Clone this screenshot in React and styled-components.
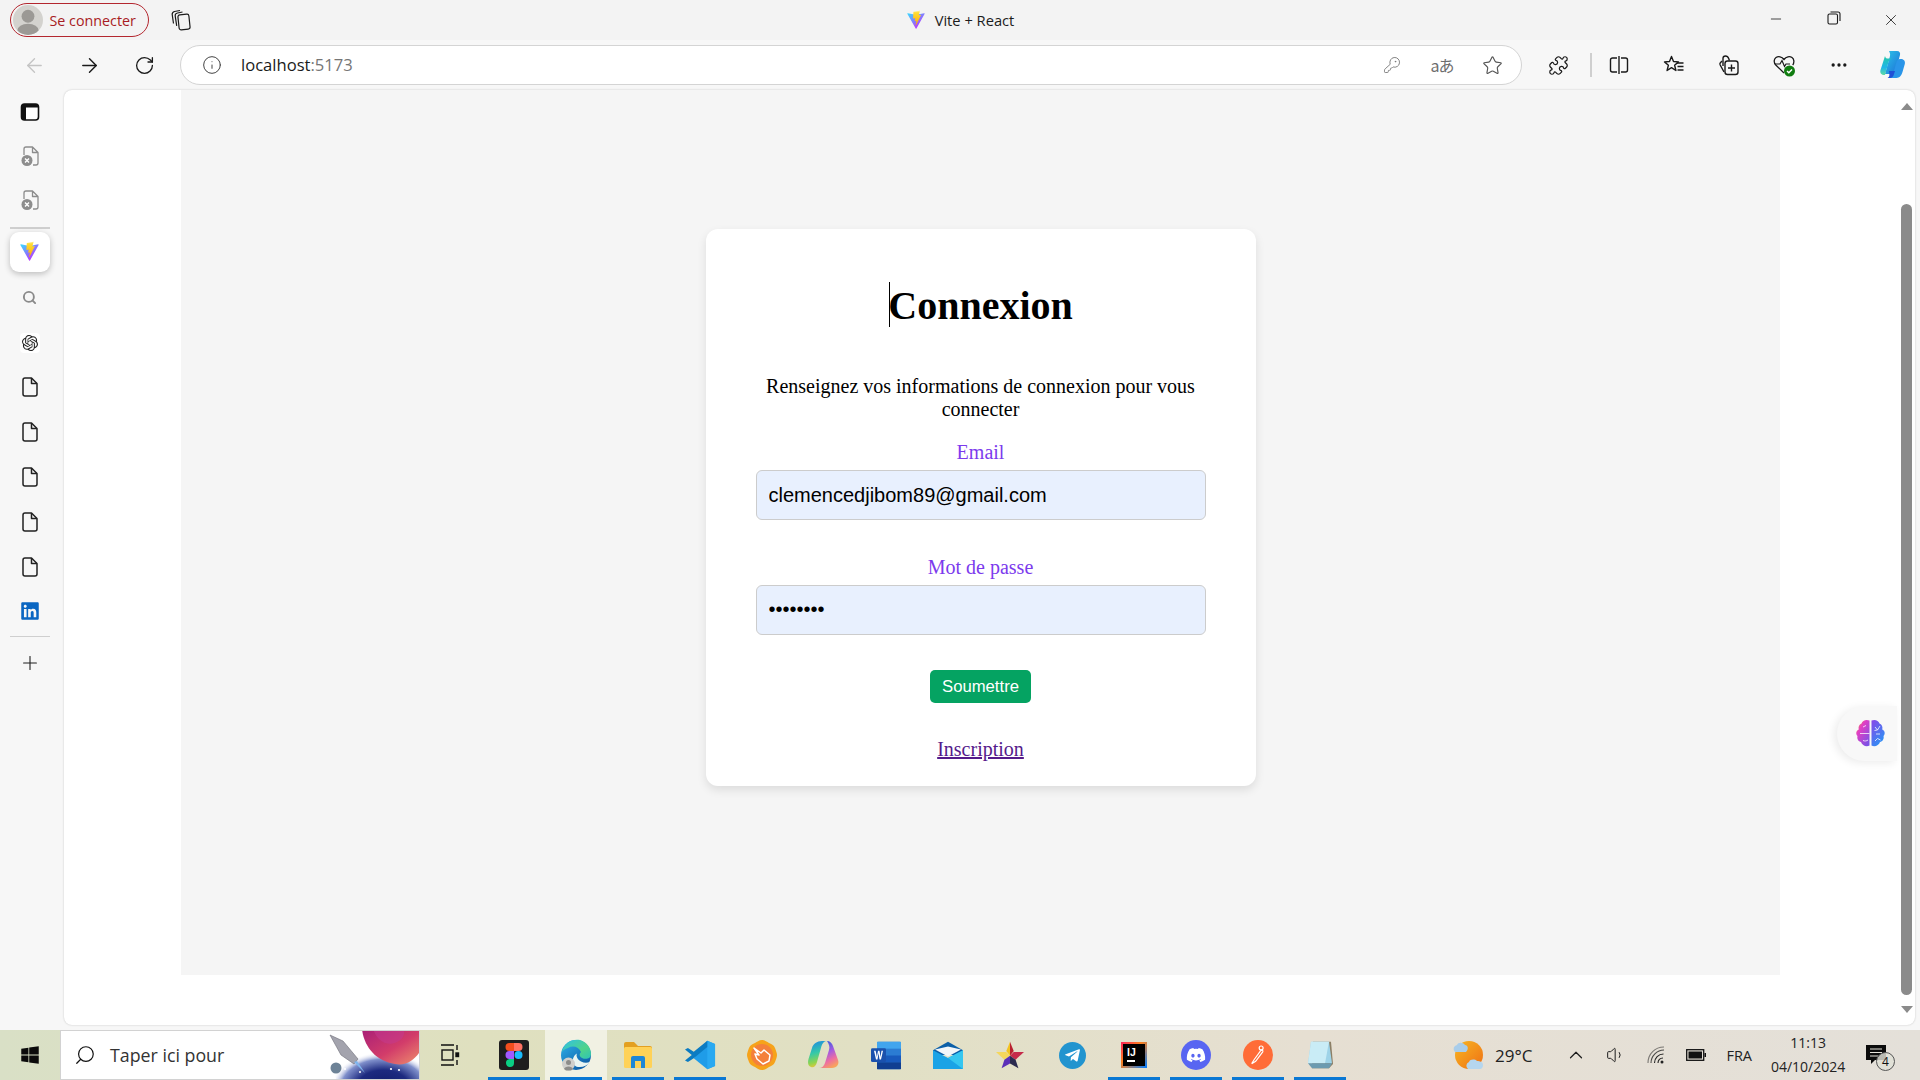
import React from "react";
import styled, { createGlobalStyle } from "styled-components";
import {
  ArrowLeft,
  ArrowRight,
  RotateCw,
  Info,
  KeyRound,
  Star,
  Puzzle,
  MoreHorizontal,
  Minus,
  X,
  Plus,
  Search,
  ChevronUp,
  Volume1,
} from "lucide-react";
import { FaLinkedin, FaDiscord, FaTelegramPlane, FaWindows } from "react-icons/fa";
import { SiOpenai } from "react-icons/si";

const chromeFont = `"Open Sans", "Noto Sans", sans-serif`;

const GlobalStyle = createGlobalStyle`
  html, body {
    margin: 0;
    padding: 0;
    overflow: hidden;
    background: #f7f7f7;
  }
  #root {
    width: 1920px;
    height: 1080px;
  }
`;

const Screen = styled.div`
  width: 1920px;
  height: 1080px;
  display: flex;
  flex-direction: column;
  overflow: hidden;
  font-family: ${chromeFont};
`;

/* title bar */
const TitleBar = styled.div`
  height: 40px;
  flex: none;
  display: grid;
  grid-template-columns: 1fr auto 1fr;
  align-items: center;
  background: #f3f3f3;
`;
const TitleLeft = styled.div`
  display: flex;
  align-items: center;
  padding-left: 10px;
`;
const ProfilePill = styled.div`
  box-sizing: border-box;
  width: 139px;
  height: 34px;
  display: flex;
  align-items: center;
  gap: 6.5px;
  padding-left: 2px;
  border: 1.5px solid #b3262e;
  border-radius: 17px;
  color: #a81c24;
  font-size: 14.3px;
`;
const Avatar = styled.div`
  width: 30px;
  height: 30px;
  border-radius: 50%;
  overflow: hidden;
  background: #d3d2ce;
  flex: none;
`;
const TabActions = styled.div`
  display: flex;
  margin-left: 21px;
`;
const PageTitle = styled.div`
  display: flex;
  align-items: center;
  gap: 9px;
  font-size: 14.7px;
  color: #1c1c1c;
`;
const WindowControls = styled.div`
  display: flex;
  justify-content: flex-end;
  color: #1a1a1a;
`;
const WindowButton = styled.div`
  width: 57.5px;
  display: flex;
  justify-content: center;
`;

/* address row */
const AddressRow = styled.div`
  height: 50px;
  flex: none;
  display: flex;
  align-items: center;
  padding-left: 7px;
  background: #f7f7f7;
`;
const ToolButton = styled.div`
  width: ${(p) => p.$w || 55}px;
  height: 40px;
  flex: none;
  display: flex;
  align-items: center;
  justify-content: center;
  color: ${(p) => p.$color || "#1a1a1a"};
`;
const AddressBar = styled.div`
  box-sizing: border-box;
  width: 1342px;
  height: 40px;
  margin-left: 8px;
  display: flex;
  align-items: center;
  padding: 0 4px 0 21px;
  background: #fff;
  border: 1.5px solid #d4d4d4;
  border-radius: 20px;
`;
const Url = styled.div`
  margin: -2px 0 0 19px;
  flex: 1;
  font-size: 16.6px;
  color: #1a1a1a;
  span {
    color: #767676;
  }
`;
const TranslateGlyph = styled.span`
  font-family: "Noto Sans CJK JP", "Noto Sans", sans-serif;
  font-size: 16px;
  letter-spacing: -1px;
  color: #6e6e6e;
`;
const ToolDivider = styled.div`
  width: 1.5px;
  height: 24px;
  flex: none;
  margin-left: 4px;
  background: #cfcfcf;
`;
const RightTools = styled.div`
  display: flex;
  align-items: center;
  margin-left: 9px;
`;

/* middle */
const Middle = styled.div`
  flex: 1;
  min-height: 0;
  display: flex;
  padding: 0 5px 5px 0;
  background: #f7f7f7;
`;
const Sidebar = styled.div`
  width: 59px;
  margin-right: 5px;
  flex: none;
  display: flex;
  flex-direction: column;
  align-items: center;
`;
const SideSlot = styled.div`
  width: 100%;
  height: ${(p) => p.$h || 44.8}px;
  flex: none;
  display: flex;
  align-items: center;
  justify-content: center;
  color: ${(p) => p.$color || "#1f1f1f"};
`;
const SideDivider = styled.div`
  width: 40px;
  height: 1.5px;
  flex: none;
  margin: ${(p) => p.$margin};
  background: #cfcfcf;
`;
const ActiveTile = styled.div`
  width: 40px;
  height: 40px;
  flex: none;
  margin-bottom: 4px;
  display: flex;
  align-items: center;
  justify-content: center;
  background: #fff;
  border-radius: 9px;
  box-shadow: 0 2px 6px rgba(0, 0, 0, 0.24);
`;
const OpenAiBadge = styled.div`
  width: 20px;
  height: 20px;
  display: flex;
  align-items: center;
  justify-content: center;
  background: #fff;
  border-radius: 4px;
`;

/* page */
const Page = styled.div`
  position: relative;
  flex: 1;
  display: flex;
  padding-left: 117px;
  background: #fff;
  border-radius: 8px;
  box-shadow: 0 0 2px rgba(0, 0, 0, 0.22);
  overflow: hidden;
`;
const GrayArea = styled.div`
  box-sizing: border-box;
  width: 1599px;
  height: 885px;
  flex: none;
  display: flex;
  justify-content: center;
  padding-top: 139px;
  background: #f5f5f5;
`;
const Card = styled.form`
  box-sizing: border-box;
  width: 550px;
  height: 557px;
  padding: 54px 50px 25px;
  display: flex;
  flex-direction: column;
  align-items: center;
  background: #fff;
  border-radius: 12px;
  box-shadow: 0 4px 10px rgba(0, 0, 0, 0.1);
  font-family: "Liberation Serif", "Times New Roman", serif;
`;
const Title = styled.h1`
  position: relative;
  margin: 0 0 46px;
  font-size: 40px;
  line-height: 46px;
  font-weight: 700;
  color: #000;
`;
const Caret = styled.span`
  position: absolute;
  left: 1px;
  top: -1px;
  width: 1px;
  height: 45px;
  background: #000;
`;
const Intro = styled.p`
  margin: 0 0 20px;
  font-size: 20px;
  line-height: 23px;
  text-align: center;
  color: #000;
`;
const FieldLabel = styled.label`
  margin-bottom: 6px;
  font-size: 20px;
  line-height: 23px;
  color: #7c3aed;
`;
const TextField = styled.input`
  box-sizing: border-box;
  width: 450px;
  height: 50px;
  flex: none;
  margin-bottom: 35.5px;
  padding: 0 12px;
  background: #e8f0fe;
  border: 1.5px solid #cccccc;
  border-radius: 6px;
  outline: none;
  color: #000;
  font-family: "Liberation Sans", Arial, sans-serif;
  font-size: 20px;
`;
const SubmitButton = styled.button`
  box-sizing: border-box;
  width: 101px;
  height: 33px;
  flex: none;
  margin-bottom: 35px;
  padding: 0;
  background: #05a362;
  border: none;
  border-radius: 5px;
  color: #fff;
  font-family: "Liberation Sans", Arial, sans-serif;
  font-size: 16.7px;
`;
const SignupLink = styled.a`
  font-size: 20px;
  line-height: 23px;
  color: #551a8b;
  text-decoration: underline;
`;

/* fake scrollbar */
const ScrollColumn = styled.div`
  width: 17px;
  margin-left: auto;
  display: flex;
  flex-direction: column;
  align-items: center;
`;
const ScrollArrow = styled.div`
  width: 0;
  height: 0;
  flex: none;
  margin: ${(p) => p.$margin};
  border-left: 6.5px solid transparent;
  border-right: 6.5px solid transparent;
  border-${(p) => (p.$up ? "bottom" : "top")}: 7px solid #8b8b8b;
`;
const ScrollThumb = styled.div`
  width: 11px;
  height: 791px;
  flex: none;
  background: #8b8b8b;
  border-radius: 5.5px;
`;
const AssistantTab = styled.div`
  position: absolute;
  right: 18px;
  top: 616px;
  width: 60px;
  height: 55px;
  display: flex;
  align-items: center;
  justify-content: center;
  padding-left: 6px;
  box-sizing: border-box;
  background: #f8f8f8;
  border-radius: 28px 0 0 28px;
  box-shadow: -3px 2px 9px rgba(0, 0, 0, 0.08);
`;

/* taskbar */
const Taskbar = styled.div`
  height: 50px;
  flex: none;
  display: flex;
  align-items: stretch;
  background: linear-gradient(90deg, #d9e0c6 0%, #dfe0bf 25%, #e1e0c4 45%, #e6dfd2 68%, #e4e0d9 100%);
  color: #111;
`;
const StartButton = styled.div`
  width: 60px;
  flex: none;
  display: flex;
  align-items: center;
  justify-content: center;
  color: #0b0b0b;
`;
const SearchBox = styled.div`
  box-sizing: border-box;
  width: 360px;
  flex: none;
  display: flex;
  align-items: center;
  padding-left: 13px;
  background: #fff;
  border: 1px solid #d2d2d2;
  overflow: hidden;
`;
const SearchText = styled.span`
  margin-left: 14px;
  font-size: 17.8px;
  color: #333;
`;
const SearchArt = styled.svg`
  margin-left: auto;
  flex: none;
`;
const TaskViewButton = styled.div`
  width: 60px;
  flex: none;
  margin-right: 3px;
  display: flex;
  align-items: center;
  justify-content: center;
`;
const TaskSlot = styled.div`
  position: relative;
  width: 62px;
  flex: none;
  display: flex;
  align-items: center;
  justify-content: center;
  background: ${(p) => (p.$focused ? "rgba(255,255,255,0.55)" : "transparent")};
  &::after {
    content: "";
    display: ${(p) => (p.$running ? "block" : "none")};
    position: absolute;
    left: 5px;
    right: 5px;
    bottom: 0;
    height: 3px;
    background: #0a78d4;
  }
`;
const IjTile = styled.div`
  box-sizing: border-box;
  width: 26px;
  height: 26px;
  padding: 3px 4px;
  background: #000;
  border: 2px solid;
  border-image: linear-gradient(135deg, #fe2857, #fc801d 40%, #087cfa) 1;
  color: #fff;
  font-family: "Liberation Sans", sans-serif;
  font-size: 10.5px;
  font-weight: 700;
  line-height: 11px;
  &::after {
    content: "";
    display: block;
    width: 8px;
    height: 1.5px;
    margin-top: 2px;
    background: #fff;
  }
`;
const RoundApp = styled.div`
  width: ${(p) => p.$size || 30}px;
  height: ${(p) => p.$size || 30}px;
  border-radius: 50%;
  display: flex;
  align-items: center;
  justify-content: center;
  background: ${(p) => p.$bg};
  color: #fff;
`;
const Tray = styled.div`
  flex: 1;
  display: flex;
  align-items: center;
  min-width: 0;
`;
const Weather = styled.div`
  display: flex;
  align-items: center;
  gap: 11px;
  margin-left: 101px;
  font-size: 17px;
  color: #222;
`;
const TrayIcon = styled.div`
  width: 40px;
  flex: none;
  display: flex;
  justify-content: center;
  color: #1c1c1c;
`;
const TrayIcons = styled.div`
  display: flex;
  align-items: center;
  margin-left: 24px;
`;
const Lang = styled.div`
  margin-left: 10px;
  font-size: 14.5px;
  color: #222;
`;
const Clock = styled.div`
  width: 90px;
  margin-left: 11px;
  text-align: center;
  font-size: 14px;
  line-height: 24px;
  color: #222;
`;
const Notification = styled.div`
  position: relative;
  margin-left: 13px;
  display: flex;
`;
const NotificationBadge = styled.span`
  position: absolute;
  right: -9px;
  bottom: -6px;
  width: 19px;
  height: 19px;
  box-sizing: border-box;
  display: flex;
  align-items: center;
  justify-content: center;
  border: 1px solid #555;
  border-radius: 50%;
  background: rgba(225, 224, 215, 0.82);
  font-size: 12px;
  color: #111;
`;

/* drawings */
const ViteLogo = ({ id, size = 20 }) => (
  <svg width={size} height={size} viewBox="0 0 32 32" fill="none">
    <defs>
      <linearGradient id={`${id}a`} x1="6" y1="5" x2="22" y2="27" gradientUnits="userSpaceOnUse">
        <stop stopColor="#41D1FF" />
        <stop offset="1" stopColor="#BD34FE" />
      </linearGradient>
      <linearGradient id={`${id}b`} x1="17" y1="2" x2="17" y2="25" gradientUnits="userSpaceOnUse">
        <stop stopColor="#FFEA83" />
        <stop offset="0.1" stopColor="#FFDD35" />
        <stop offset="1" stopColor="#FFA800" />
      </linearGradient>
    </defs>
    <path
      fill={`url(#${id}a)`}
      d="M29.8836 6.146L16.7418 29.6457c-.2714.4851-.9684.488-1.2439.0052L2.0956 6.1482c-.3-.5262.1498-1.1635.746-1.057l13.156 2.3516c.0839.015.1698.0148.2537-.0004l12.8806-2.3478c.5942-.1083 1.0461.5241.7516 1.0513Z"
    />
    <path
      fill={`url(#${id}b)`}
      d="M21.8807 1.0047 12.1547 2.9105c-.1562.0306-.2717.1627-.2812.3216l-.5983 10.1049c-.0141.238.2045.4226.4369.369l2.7079-.6249c.2533-.0584.4823.1646.4302.4194l-.8045 3.9397c-.0541.2651.1948.4918.4537.4132l1.6726-.5081c.2592-.0787.5082.1487.4536.414l-1.2784 6.1877c-.08.387.4348.5981.6496.2664l.1434-.2215 7.9257-15.8172c.1327-.2649-.096-.5669-.387-.5106l-2.7873.538c-.2619.0506-.4847-.1933-.4108-.4493l1.8192-6.3066c.0739-.2565-.1496-.5007-.4119-.4491Z"
    />
  </svg>
);

const TabStack = () => (
  <svg width="22" height="22" viewBox="0 0 22 22" fill="none" stroke="#1a1a1a" strokeWidth="1.2" strokeLinejoin="round">
    <path d="M10 1.500 4.500 2.500C3 3 2 4 2.200 5.500l1.300 9" />
    <path d="M12.500 3 7.500 4C6 4.300 5 5.200 5.200 6.800l1.500 10" />
    <rect x="8.500" y="5.500" width="11" height="15" rx="2" transform="rotate(-6 14 13)" />
  </svg>
);

const SidebarToggle = () => (
  <svg width="20" height="20" viewBox="0 0 20 20">
    <rect x="1.500" y="2" width="17" height="16" rx="3" fill="#fff" stroke="#111" strokeWidth="1.600" />
    <path d="M1.500 5a3 3 0 0 1 3-3h11a3 3 0 0 1 3 3v.5h-17z" fill="#111" />
    <path d="M1.500 5H6v13H4.500a3 3 0 0 1-3-3z" fill="#111" />
  </svg>
);

const DocIcon = () => (
  <svg width="16" height="20" viewBox="0 0 16 20" fill="none" stroke="#222" strokeWidth="1.500" strokeLinejoin="round">
    <path d="M3 1h6.500L15 6.500V17a2 2 0 0 1-2 2H3a2 2 0 0 1-2-2V3a2 2 0 0 1 2-2Z" />
    <path d="M9.500 1v5.500H15" />
  </svg>
);

const DocErrorIcon = () => (
  <svg width="18" height="20" viewBox="0 0 18 20" fill="none">
    <path d="M5 1h6.500L17 6.500V17a2 2 0 0 1-2 2h-3M3 9V3a2 2 0 0 1 2-2m6.500 0v5.500H17" stroke="#8d8d8d" strokeWidth="1.300" strokeLinejoin="round" />
    <circle cx="6" cy="14.500" r="5.500" fill="#8d8d8d" />
    <path d="m4 12.500 4 4m0-4-4 4" stroke="#fff" strokeWidth="1.400" />
  </svg>
);

const SplitIcon = () => (
  <svg width="20" height="20" viewBox="0 0 20 20" fill="none" stroke="#1a1a1a" strokeWidth="1.400">
    <path d="M8 3H3.500a2 2 0 0 0-2 2v10a2 2 0 0 0 2 2H8M12 3h4.500a2 2 0 0 1 2 2v10a2 2 0 0 1-2 2H12" />
    <path d="M10 1v18" />
  </svg>
);

const FavoritesIcon = () => (
  <svg width="22" height="22" viewBox="0 0 22 22" fill="none" stroke="#1a1a1a" strokeWidth="1.400" strokeLinejoin="round">
    <path d="m8.500 2.500 2 5 5 .4-3.900 3.300 1.300 5.300-4.400-2.900-4.400 2.900 1.300-5.300L1.500 7.900l5-.4z" />
    <path d="M14 9h6.500M14.500 12.500h6M14.500 16h6" />
  </svg>
);

const CollectionsIcon = () => (
  <svg width="22" height="22" viewBox="0 0 22 22" fill="none" stroke="#1a1a1a" strokeWidth="1.400" strokeLinejoin="round">
    <path d="M4 7 2.200 9c-.5.6-.4 1.200 0 2l3.800 7" />
    <path d="M5 12V4.500C5 3 6 2 7.500 2c1.400 0 2.600.9 3.200 2.500l.7 2" />
    <rect x="7" y="7" width="13" height="13.500" rx="2.500" />
    <path d="M13.500 10.500v7M10 14h7" />
  </svg>
);

const HealthIcon = () => (
  <svg width="24" height="24" viewBox="0 0 24 24" fill="none">
    <path d="M12 20 3.800 12C1.500 9.500 1.800 6 4 4.500c2.300-1.500 5.800-1 8 2 2.200-3 5.700-3.500 8-2 2.200 1.500 2.500 5 .7 7.500" stroke="#1a1a1a" strokeWidth="1.300" />
    <path d="M3 11h5l2-3.500 2.500 6 1.500-2.500h4" stroke="#1a1a1a" strokeWidth="1.200" />
    <circle cx="17.500" cy="18" r="5.500" fill="#107c10" />
    <path d="m15 18 1.800 1.800 3.200-3.400" stroke="#fff" strokeWidth="1.400" />
  </svg>
);

const CopilotLogo = () => (
  <svg width="30" height="30" viewBox="0 0 30 30">
    <defs>
      <linearGradient id="cpA" x1="0" y1="0" x2="1" y2="1">
        <stop stopColor="#2bc5e8" />
        <stop offset="1" stopColor="#1d6ed8" />
      </linearGradient>
      <linearGradient id="cpB" x1="0" y1="0" x2="0" y2="1">
        <stop stopColor="#24c8a8" />
        <stop offset="0.6" stopColor="#1fb6e8" />
        <stop offset="1" stopColor="#61dba0" />
      </linearGradient>
    </defs>
    <path d="M13 1h8c2.500 0 3.500 2 3 4l-4 15c-.8 3-2 4-5 4H9l5-18c.4-1.800-.2-3-1-5Z" fill="url(#cpA)" />
    <path d="M9 6 4.500 20c-.8 2.500.5 5 3.500 5h1l3.500-13c.6-2 1.600-3 3-3.500H11C10 8.500 9.300 7.500 9 6Z" fill="url(#cpB)" />
    <path d="M24 9h1c3 0 4.500 2.500 3.800 5l-2.300 8c-.8 3-3 6-6 6h-9c2.500 0 4.500-1.500 5.500-4l1.500-5 2-7c.6-1.800 1.700-2.800 3.500-3Z" fill="#2a95e8" />
    <path d="M13 21h6l-1.500 4.500c-.7 1.500-2 2.500-3.500 2.500h-3c2 0 3-2 2-7Z" fill="#2150d6" />
  </svg>
);

const BrainLogo = () => (
  <svg width="31" height="29" viewBox="0 0 31 29" fill="none">
    <defs>
      <linearGradient id="brL" x1="0" y1="0" x2="0.8" y2="1">
        <stop stopColor="#f59a23" />
        <stop offset="0.35" stopColor="#e23fc4" />
        <stop offset="1" stopColor="#7a52e6" />
      </linearGradient>
      <linearGradient id="brR" x1="0" y1="0" x2="0.6" y2="1">
        <stop stopColor="#8a45e8" />
        <stop offset="1" stopColor="#2c92f5" />
      </linearGradient>
    </defs>
    <path d="M14.500 1.500C11 0 7.500 1.500 6.500 4.500 4 5.500 3 8 3.800 10.500 1 11.500.5 15 2.500 17c-.8 3 1 5.500 3.500 6 1 3.500 5.500 5.500 8.500 3.500Z" fill="url(#brL)" />
    <path d="M16.500 1.500c3.500-1.500 7 0 8 3 2.500 1 3.500 3.500 2.700 6 2.800 1 3.300 4.500 1.300 6.500.8 3-1 5.500-3.500 6-1 3.500-5.500 5.500-8.500 3.500Z" fill="url(#brR)" />
    <path d="M5 14.500h9.500M8 8l3-1.500M8 21.500c2 .8 3.500.5 5-.5M20 8l2.500 3M25 7l-2.500 4-3 .5M25 15h-4M20 22l2.500-2.500 3 1.500" stroke="#fff" strokeOpacity="0.75" strokeWidth="1" />
  </svg>
);

const RocketArt = () => (
  <SearchArt width="90" height="48" viewBox="0 0 90 48">
    <defs>
      <radialGradient id="nebula" cx="0.55" cy="0.75" r="0.6">
        <stop stopColor="#0f1a68" />
        <stop offset="0.5" stopColor="#1d2a80" />
        <stop offset="0.8" stopColor="#7f8fcb" />
        <stop offset="1" stopColor="#fff" stopOpacity="0" />
      </radialGradient>
      <linearGradient id="planet" x1="0" y1="0" x2="1" y2="1">
        <stop stopColor="#a81f78" />
        <stop offset="0.55" stopColor="#d23c6a" />
        <stop offset="1" stopColor="#ee8c6c" />
      </linearGradient>
    </defs>
    <ellipse cx="50" cy="42" rx="44" ry="30" fill="url(#nebula)" />
    <path d="M33 -2h57v24c-5 7-13 13-24 11C47 30 35 16 33 -2Z" fill="url(#planet)" />
    <path d="M44 -2c4 12 14 18 24 13 6-3 8-8 7-13z" fill="#c43a8e" fillOpacity="0.55" />
    <circle cx="7" cy="37" r="5.500" fill="#6d8296" />
    <path d="M1 4 14 10 29 28 25 33 12 24Z" fill="#a3a3ad" stroke="#6f6f78" strokeWidth="0.600" />
    <path d="m25 31 11 11-8-12z" fill="#7fb5ee" />
    <circle cx="16" cy="38" r="1" fill="#fff" />
    <circle cx="31" cy="41" r="1" fill="#fff" />
    <circle cx="62" cy="38" r="1.100" fill="#fff" />
    <circle cx="70" cy="39" r="1.100" fill="#fff" />
  </SearchArt>
);

const TaskViewIcon = () => (
  <svg width="20" height="24" viewBox="0 0 20 24" fill="none" stroke="#111" strokeWidth="1.400">
    <path d="M1 2h13M1 22h13" />
    <rect x="2" y="7" width="11" height="10" />
    <path d="M17 2v5M17 17v5" />
    <rect x="16" y="10" width="2.500" height="3.500" fill="#111" />
  </svg>
);

const FigmaLogo = () => (
  <svg width="30" height="30" viewBox="0 0 30 30">
    <rect width="30" height="30" rx="3" fill="#1e1e1e" />
    <path d="M10.500 3H15v8h-4.500a4 4 0 0 1 0-8Z" fill="#f24e1e" />
    <path d="M15 3h4.500a4 4 0 0 1 0 8H15z" fill="#ff7262" />
    <path d="M10.500 11H15v8h-4.500a4 4 0 0 1 0-8Z" fill="#a259ff" />
    <circle cx="19.500" cy="15" r="4" fill="#1abcfe" />
    <path d="M10.500 19H15v4a4 4 0 1 1-4.500-4Z" fill="#0acf83" />
  </svg>
);

const EdgeLogo = () => (
  <svg width="32" height="32" viewBox="0 0 32 32">
    <defs>
      <linearGradient id="edA" x1="0" y1="0" x2="0.8" y2="1">
        <stop stopColor="#2fb4ec" />
        <stop offset="1" stopColor="#0c59a4" />
      </linearGradient>
      <linearGradient id="edB" x1="0" y1="0" x2="1" y2="1">
        <stop stopColor="#2fc0e8" />
        <stop offset="0.6" stopColor="#4fd38a" />
        <stop offset="1" stopColor="#2ec4b6" />
      </linearGradient>
    </defs>
    <circle cx="16" cy="16" r="15" fill="url(#edA)" />
    <path d="M2 13C4 4 12-.5 20 1c7 2 11 8 11 14 0 4.500-5 6-9 4-3-1.500-3-4-1-6-2-5-8-7-13-4-3 1-5 2-6 4Z" fill="url(#edB)" />
    <path d="M18 28c5 .5 9-1 12-5-3 1-6 1-9-.5-3-1.500-5.500-5.500-4-8-3.500 2-5 6-3.500 10 1 2 2.500 3.500 4.500 3.500Z" fill="#e9f5f2" />
    <circle cx="8.500" cy="25" r="6.500" fill="#cfcfcc" />
    <circle cx="8.500" cy="23.500" r="2.500" fill="#8c8c8a" />
    <path d="M4 30c.8-3.500 8.200-3.500 9 0l-2 1.500H6Z" fill="#8c8c8a" />
  </svg>
);

const FilesLogo = () => (
  <svg width="30" height="28" viewBox="0 0 30 28">
    <path d="M1 3a2 2 0 0 1 2-2h8l4 4h12a2 2 0 0 1 2 2v3H1z" fill="#e3a021" />
    <rect x="1" y="6" width="28" height="21" rx="1.500" fill="#ffd257" />
    <path d="M8 27V17a2 2 0 0 1 2-2h10a2 2 0 0 1 2 2v10h-4v-7h-6v7z" fill="#1f87d6" />
  </svg>
);

const VsCodeLogo = () => (
  <svg width="31" height="30" viewBox="0 0 32 38" preserveAspectRatio="none">
    <path d="M23 1 31 5v28l-8 4-14-14z" fill="#1f9ce8" />
    <path d="M23 1v36l8-4V5z" fill="#29a9f1" />
    <path d="M23 9 9 23 3 28l-3-2 7-7-7-7 3-2 6 5L23 1z" fill="#0b7bc2" />
  </svg>
);

const BraveHandLogo = () => (
  <svg width="30" height="30" viewBox="0 0 30 30">
    <path d="M15 0c3 0 5 2 7 3s5 2 6 5 2 5 2 7-1 4-2 7-4 4-6 5-4 3-7 3-5-2-7-3-5-2-6-5-2-5-2-7 1-4 2-7 4-4 6-5 4-3 7-3Z" fill="#f6a31a" />
    <circle cx="15" cy="15" r="11" fill="#f4803b" />
    <path d="M7 8 14 13 17 10l6 5-1 6-6 3-6-5-2-5 4 1z" fill="none" stroke="#fff" strokeWidth="1.500" strokeLinejoin="round" />
  </svg>
);

const M365Logo = () => (
  <svg width="32" height="30" viewBox="0 0 32 30">
    <defs>
      <linearGradient id="msA" x1="0.3" y1="0" x2="0.5" y2="1">
        <stop stopColor="#1f8de0" />
        <stop offset="0.45" stopColor="#35c9a8" />
        <stop offset="0.8" stopColor="#93d54c" />
        <stop offset="1" stopColor="#f6c23d" />
      </linearGradient>
      <linearGradient id="msB" x1="0.2" y1="0" x2="0.6" y2="1">
        <stop stopColor="#2a5fdc" />
        <stop offset="0.45" stopColor="#a45be0" />
        <stop offset="0.75" stopColor="#ee6fa0" />
        <stop offset="1" stopColor="#f8a25e" />
      </linearGradient>
    </defs>
    <path d="M19 1c3 0 5 2 6 5l5 14c1.500 4-1 8-6 8H11c3 0 5-2 6-5l4-13c1-3 0-6-2-9Z" fill="url(#msB)" />
    <path d="M14 1h5c-3 0-4.500 2-5.500 5L9 22c-1 4-3 6-6 5s-3.500-4-2.500-8L4 8c1-4 5-7 10-7Z" fill="url(#msA)" />
  </svg>
);

const WordLogo = () => (
  <svg width="30" height="29" viewBox="0 0 30 36" preserveAspectRatio="none">
    <rect x="6" y="1" width="24" height="34" rx="1.500" fill="#2b7cd3" />
    <rect x="6" y="1" width="24" height="8.500" fill="#41a5ee" />
    <rect x="6" y="18" width="24" height="8.500" fill="#185abd" />
    <rect x="6" y="26.500" width="24" height="8.500" fill="#103f91" />
    <rect y="9" width="15" height="17" rx="1.500" fill="#1a51ad" />
    <path d="m3 12 2 11h1.500L7.500 15l1 8H10l2-11h-1.500l-1 8-1-8H7l-1.100 8-1.300-8z" fill="#fff" />
  </svg>
);

const MailLogo = () => (
  <svg width="30" height="28" viewBox="0 0 30 36" preserveAspectRatio="none">
    <path d="M15 1 30 12v6H0v-6z" fill="#0b5fa8" />
    <path d="m2 11 13-4 13 4-13 9z" fill="#f2f6fa" />
    <path d="M0 12 15 22 30 12v24H0z" fill="#1aa3e6" />
    <path d="M15 22 30 12v24z" fill="#35c6f0" />
  </svg>
);

const StarLogo = () => (
  <svg width="28" height="28" viewBox="0 0 30 36" preserveAspectRatio="none">
    <path d="M15 1 19 13 15 19z" fill="#b8202f" />
    <path d="M15 1 11 13 15 19z" fill="#f3c320" />
    <path d="M0 14h11l4 5-6 5z" fill="#f5d75c" />
    <path d="M30 14H19l-4 5 6 5z" fill="#c52a4a" />
    <path d="m6 35 3-11 6-5v10z" fill="#5b2fb8" />
    <path d="m24 35-3-11-6-5v10z" fill="#2b2b4f" />
  </svg>
);

const PostmanLogo = () => (
  <RoundApp $size={30} $bg="#ff6c37">
    <svg width="18" height="22" viewBox="0 0 20 28" fill="none" stroke="#fff" strokeWidth="1.500" strokeLinecap="round">
      <circle cx="14" cy="5" r="2.500" />
      <path d="M13 9 5 20l-3 5 5-3L16 10c1-2-1-3-3-1Z" />
    </svg>
  </RoundApp>
);

const NotepadLogo = () => (
  <svg width="30" height="29" viewBox="0 0 30 34" preserveAspectRatio="none">
    <path d="M8 1h18l2 26-4 5H7z" fill="#8c7f66" />
    <path d="M6 1h18l3 25H3z" fill="#9ed3e8" />
    <path d="M6 1h18l-4 25H3z" fill="#c9ecf6" />
    <path d="M3 26h24l-3 6H7z" fill="#6c9bb0" />
  </svg>
);

const WeatherIcon = () => (
  <svg width="32" height="32" viewBox="0 0 32 32">
    <defs>
      <linearGradient id="sun" x1="0" y1="0" x2="1" y2="1">
        <stop stopColor="#f8b722" />
        <stop offset="1" stopColor="#ef6f14" />
      </linearGradient>
    </defs>
    <circle cx="17" cy="16" r="14" fill="url(#sun)" />
    <path d="M3 13a4 4 0 0 1 2-7c1-3 6-3 8 0 3 0 4 4 1 7z" fill="#a9cdea" />
    <path d="M16 30a4 4 0 0 1 1-7c1-3 6-3 8-1 3 0 6 1 6 4 0 2-1 4-3 4z" fill="#b5d6ee" />
  </svg>
);

const WifiIcon = () => (
  <svg width="18" height="18" viewBox="0 0 18 18" fill="none" stroke="#222" strokeWidth="1.100">
    <path d="M1 17C1 8 8 1 17 1" opacity="0.55" />
    <path d="M4 17C4 10 10 4 17 4" opacity="0.8" />
    <path d="M7.500 17c0-5 4-9 9-9" />
    <path d="M11 17c0-3 2-5 5-5" />
    <circle cx="15" cy="16" r="1.500" fill="#222" stroke="none" />
  </svg>
);

const BatteryIcon = () => (
  <svg width="20" height="12" viewBox="0 0 20 12">
    <rect x="0.700" y="0.700" width="17" height="10.600" fill="none" stroke="#111" strokeWidth="1.300" />
    <rect x="2.500" y="2.500" width="13.500" height="7" fill="#111" />
    <rect x="18.500" y="4" width="1.500" height="4" fill="#111" />
  </svg>
);

const ChatIcon = () => (
  <svg width="20" height="20" viewBox="0 0 20 20">
    <path d="M0 0h20v15H9l-4 4v-4H0z" fill="#0b0b0b" />
    <path d="M4 4h12M4 7.500h12M4 11h8" stroke="#e6e4dc" strokeWidth="1.100" />
  </svg>
);

const topTools = [
  { node: <SplitIcon /> },
  { node: <FavoritesIcon /> },
  { node: <CollectionsIcon /> },
  { node: <HealthIcon /> },
  { node: <MoreHorizontal size={20} /> },
  { node: <CopilotLogo />, w: 49 },
];

const sideDocs = [0, 1, 2, 3, 4];

const taskApps = [
  { key: "figma", node: <FigmaLogo />, running: true },
  { key: "edge", node: <EdgeLogo />, running: true, focused: true },
  { key: "files", node: <FilesLogo />, running: true },
  { key: "vscode", node: <VsCodeLogo />, running: true },
  { key: "brave", node: <BraveHandLogo /> },
  { key: "m365", node: <M365Logo /> },
  { key: "word", node: <WordLogo /> },
  { key: "mail", node: <MailLogo /> },
  { key: "star", node: <StarLogo /> },
  {
    key: "telegram",
    node: (
      <RoundApp $size={27} $bg="#2294cf">
        <FaTelegramPlane size={17} />
      </RoundApp>
    ),
  },
  { key: "ij", node: <IjTile>IJ</IjTile>, running: true },
  {
    key: "discord",
    node: (
      <RoundApp $size={30} $bg="#5865f2">
        <FaDiscord size={20} />
      </RoundApp>
    ),
    running: true,
  },
  { key: "postman", node: <PostmanLogo />, running: true },
  { key: "notepad", node: <NotepadLogo />, running: true },
];

export default function App() {
  return (
    <Screen>
      <GlobalStyle />
      <TitleBar>
        <TitleLeft>
          <ProfilePill>
            <Avatar>
              <svg width="30" height="30" viewBox="0 0 28 28">
                <circle cx="14" cy="10.500" r="6" fill="#9b9995" />
                <ellipse cx="14" cy="24" rx="10" ry="6.500" fill="#9b9995" />
              </svg>
            </Avatar>
            Se connecter
          </ProfilePill>
          <TabActions>
            <TabStack />
          </TabActions>
        </TitleLeft>
        <PageTitle>
          <ViteLogo id="tabVite" size={20} />
          Vite + React
        </PageTitle>
        <WindowControls>
          <WindowButton>
            <Minus size={16} strokeWidth={1.2} />
          </WindowButton>
          <WindowButton>
            <svg width="14" height="14" viewBox="0 0 14 14" fill="none" stroke="#1a1a1a" strokeWidth="1.100">
              <rect x="1" y="3" width="9.500" height="10" rx="1.500" />
              <path d="M3.500 1h7.500a2 2 0 0 1 2 2v7" />
            </svg>
          </WindowButton>
          <WindowButton>
            <X size={18} strokeWidth={1.1} />
          </WindowButton>
        </WindowControls>
      </TitleBar>

      <AddressRow>
        <ToolButton $color="#c4c4c4">
          <ArrowLeft size={23} strokeWidth={1.4} />
        </ToolButton>
        <ToolButton>
          <ArrowRight size={23} strokeWidth={1.5} />
        </ToolButton>
        <ToolButton>
          <RotateCw size={21} strokeWidth={1.5} />
        </ToolButton>
        <AddressBar>
          <Info size={20} strokeWidth={1.2} color="#444" />
          <Url>
            localhost<span>:5173</span>
          </Url>
          <ToolButton $w={50} $color="#777">
            <KeyRound size={18} strokeWidth={1.2} />
          </ToolButton>
          <ToolButton $w={50}>
            <TranslateGlyph>aあ</TranslateGlyph>
          </ToolButton>
          <ToolButton $w={50} $color="#555">
            <Star size={21} strokeWidth={1.3} />
          </ToolButton>
        </AddressBar>
        <RightTools>
          <ToolButton>
            <Puzzle size={21} strokeWidth={1.4} />
          </ToolButton>
          <ToolDivider />
          {topTools.map((tool, idx) => (
            <ToolButton key={idx} $w={tool.w}>
              {tool.node}
            </ToolButton>
          ))}
        </RightTools>
      </AddressRow>

      <Middle>
        <Sidebar>
          <SideSlot $h={44}>
            <SidebarToggle />
          </SideSlot>
          <SideSlot $h={44}>
            <DocErrorIcon />
          </SideSlot>
          <SideSlot $h={44}>
            <DocErrorIcon />
          </SideSlot>
          <SideDivider $margin="5px 0 3px" />
          <ActiveTile>
            <ViteLogo id="sideVite" size={21} />
          </ActiveTile>
          <SideSlot $color="#8a8a8a">
            <Search size={15} strokeWidth={3} />
          </SideSlot>
          <SideSlot>
            <OpenAiBadge>
              <SiOpenai size={16} color="#222" />
            </OpenAiBadge>
          </SideSlot>
          {sideDocs.map((n) => (
            <SideSlot key={n}>
              <DocIcon />
            </SideSlot>
          ))}
          <SideSlot $color="#0a66c2">
            <FaLinkedin size={20} />
          </SideSlot>
          <SideDivider $margin="2px 0 3px" />
          <SideSlot>
            <Plus size={22} strokeWidth={1.2} />
          </SideSlot>
        </Sidebar>

        <Page>
          <GrayArea>
            <Card onSubmit={(e) => e.preventDefault()}>
              <Title>
                <Caret />
                Connexion
              </Title>
              <Intro>Renseignez vos informations de connexion pour vous connecter</Intro>
              <FieldLabel htmlFor="email">Email</FieldLabel>
              <TextField id="email" type="email" value="clemencedjibom89@gmail.com" readOnly />
              <FieldLabel htmlFor="password">Mot de passe</FieldLabel>
              <TextField id="password" type="password" value="password" readOnly />
              <SubmitButton type="submit">Soumettre</SubmitButton>
              <SignupLink href="#inscription">Inscription</SignupLink>
            </Card>
          </GrayArea>
          <ScrollColumn>
            <ScrollArrow $up $margin="13px 0 94px" />
            <ScrollThumb />
            <ScrollArrow $margin="11px 0 0" />
          </ScrollColumn>
          <AssistantTab>
            <BrainLogo />
          </AssistantTab>
        </Page>
      </Middle>

      <Taskbar>
        <StartButton>
          <FaWindows size={20} />
        </StartButton>
        <SearchBox>
          <Search size={22} strokeWidth={1.3} style={{ transform: "scaleX(-1)" }} />
          <SearchText>Taper ici pour</SearchText>
          <RocketArt />
        </SearchBox>
        <TaskViewButton>
          <TaskViewIcon />
        </TaskViewButton>
        {taskApps.map((app) => (
          <TaskSlot key={app.key} $running={app.running} $focused={app.focused}>
            {app.node}
          </TaskSlot>
        ))}
        <Tray>
          <Weather>
            <WeatherIcon />
            29°C
          </Weather>
          <TrayIcons>
            <TrayIcon>
              <ChevronUp size={22} strokeWidth={1.3} />
            </TrayIcon>
            <TrayIcon>
              <Volume1 size={20} strokeWidth={1.2} />
            </TrayIcon>
            <TrayIcon>
              <WifiIcon />
            </TrayIcon>
            <TrayIcon>
              <BatteryIcon />
            </TrayIcon>
          </TrayIcons>
          <Lang>FRA</Lang>
          <Clock>
            11:13
            <br />
            04/10/2024
          </Clock>
          <Notification>
            <ChatIcon />
            <NotificationBadge>4</NotificationBadge>
          </Notification>
        </Tray>
      </Taskbar>
    </Screen>
  );
}
